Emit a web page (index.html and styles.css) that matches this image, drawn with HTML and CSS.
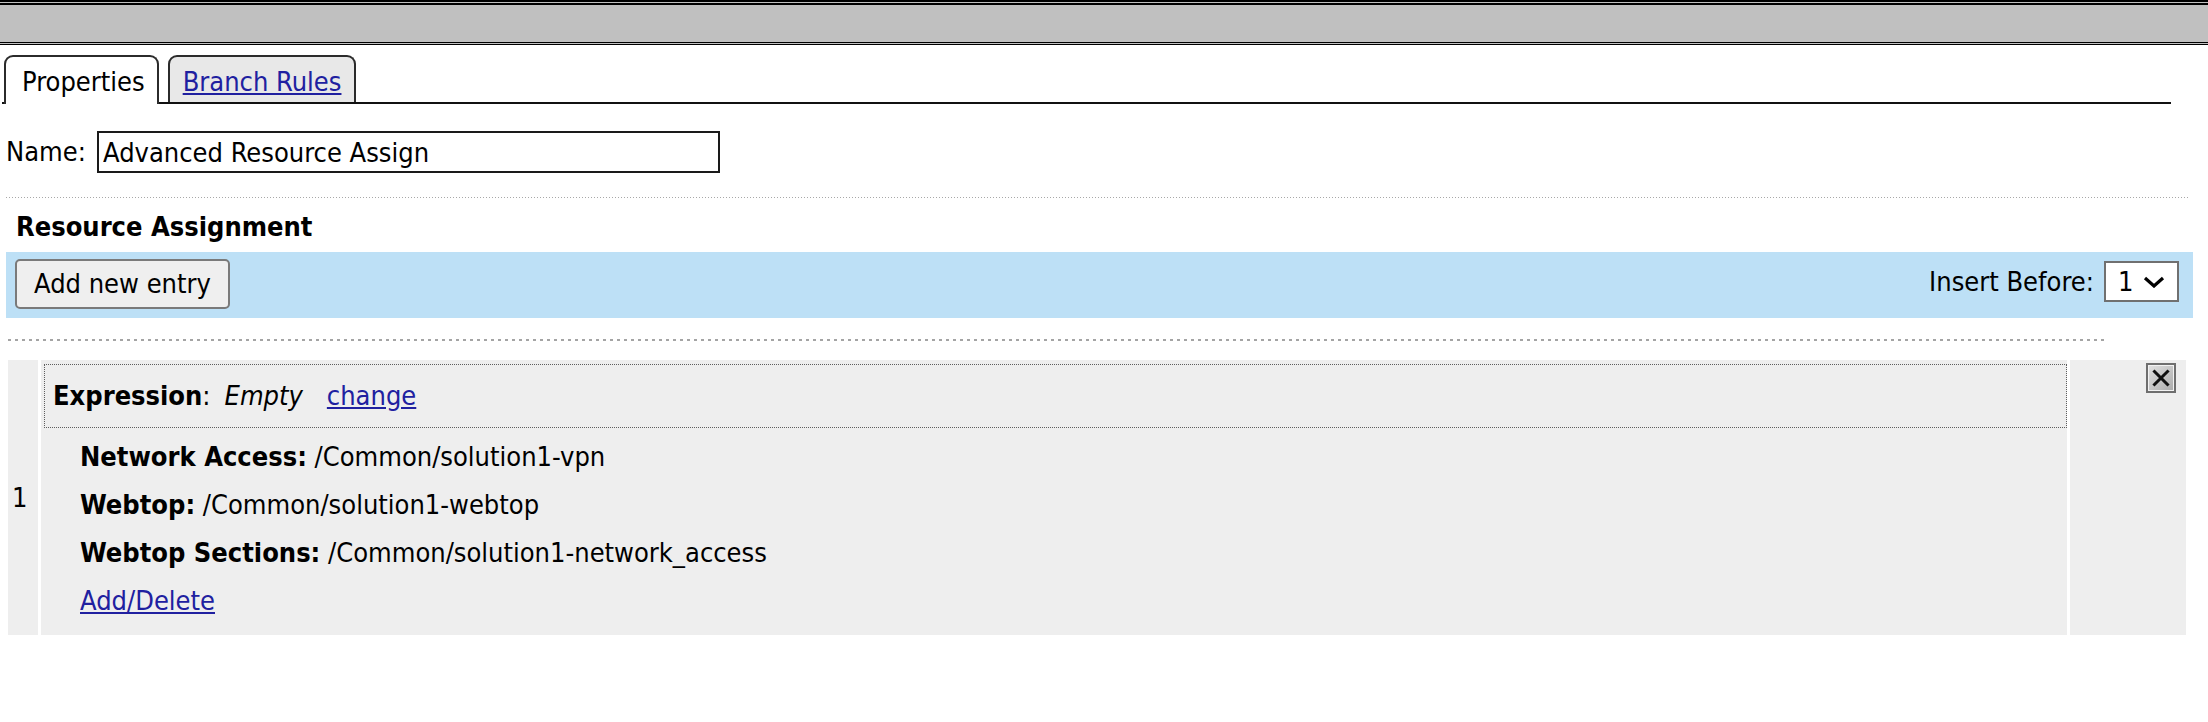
FILE: index.html
```html
<!DOCTYPE html>
<html>
<head>
<meta charset="utf-8">
<link rel="stylesheet" href="styles.css">
</head>
<body>
<div class="topbar"></div>
<div class="page">
  <div class="tabs">
    <div class="tab active">Properties</div>
    <div class="tab"><a href="#">Branch Rules</a></div>
  </div>
  <div class="name-row">
    <label class="name-label">Name:</label>
    <input class="name-input" type="text" value="Advanced Resource Assign">
  </div>
  <div class="sep-fine"></div>
  <div class="section-title">Resource Assignment</div>
  <div class="toolbar">
    <button class="btn">Add new entry</button>
    <div class="insert">
      <span>Insert Before:</span>
      <div class="select"><span>1</span><svg class="chev" width="22" height="12" viewBox="0 0 22 12"><polyline points="2,2 11,10 20,2" fill="none" stroke="#000" stroke-width="3.2"/></svg></div>
    </div>
  </div>
  <div class="sep-dots"></div>
  <div class="entry">
    <div class="num">1</div>
    <div class="main">
      <div class="expr"><b>Expression</b>:<i class="empty">Empty</i><a class="change" href="#">change</a></div>
      <div class="items">
        <div class="row"><b>Network Access:</b> /Common/solution1-vpn</div>
        <div class="row"><b>Webtop:</b> /Common/solution1-webtop</div>
        <div class="row"><b>Webtop Sections:</b> /Common/solution1-network_access</div>
        <div class="row"><a href="#">Add/Delete</a></div>
      </div>
    </div>
    <div class="actions">
      <svg class="xbtn" width="30" height="30" viewBox="0 0 30 30">
        <defs>
          <linearGradient id="xg" x1="0" y1="0" x2="1" y2="1">
            <stop offset="0" stop-color="#e4e4e4"/>
            <stop offset="1" stop-color="#a8a8a8"/>
          </linearGradient>
        </defs>
        <rect x="1" y="1" width="28" height="28" fill="url(#xg)" stroke="#6e6e6e" stroke-width="2"/>
        <rect x="2.5" y="2.5" width="25" height="25" fill="none" stroke="#f2f2f2" stroke-width="1"/>
        <path d="M8.5 8.5 L21.5 21.5 M21.5 8.5 L8.5 21.5" stroke="#111" stroke-width="3" stroke-linecap="square"/>
      </svg>
    </div>
  </div>
</div>
</body>
</html>
```

FILE: styles.css
```css
* { box-sizing: border-box; }
html, body { margin: 0; padding: 0; background: #fff; }
body {
  width: 2208px;
  font-family: "DejaVu Sans Condensed", "Liberation Sans", sans-serif;
  font-size: 27px;
  line-height: 30px;
  color: #000;
}
a { color: #2020a0; text-decoration: underline; }

.topbar {
  height: 45px;
  background: #c0c0c0;
  border-top: 5px double #000;
  border-bottom: 3px double #000;
}

.page { padding-left: 6px; }

.tabs {
  display: flex;
  gap: 9px;
  margin: 10px 0 0 -4px;
  padding-left: 2px;
  width: 2169px;
  height: 49px;
  border-bottom: 2px solid #111;
}
.tab {
  height: 47px;
  padding: 10px 13px 0;
  border: 2px solid #2b2b2b;
  border-bottom: 0;
  border-radius: 9px 9px 0 0;
  background: #e8e8e8;
}
.tab.active {
  height: 49px;
  margin-bottom: -2px;
  padding: 10px 12px 0 16px;
  background: #fff;
}

.name-row {
  display: flex;
  align-items: center;
  margin-top: 27px;
  height: 42px;
}
.name-label { width: 91px; }
.name-input {
  width: 623px;
  height: 42px;
  padding: 0 4px;
  border: 2px solid #1a1a1a;
  font: inherit;
  color: #000;
  background: #fff;
  outline: none;
}

.sep-fine {
  margin-top: 24px;
  width: 2184px;
  height: 1px;
  background-image: linear-gradient(to right, #a8a8a8 1px, transparent 1px);
  background-size: 3px 1px;
}

.section-title {
  margin: 14px 0 10px 10px;
  font-weight: bold;
}

.toolbar {
  display: flex;
  align-items: flex-start;
  width: 2187px;
  height: 66px;
  padding: 7px 14px 0 9px;
  background: #bde0f6;
}
.btn {
  height: 50px;
  padding: 0 17px;
  border: 2px solid #7a7a7a;
  border-radius: 5px;
  background: #efefef;
  font: inherit;
  color: #000;
}
.insert {
  display: flex;
  align-items: center;
  gap: 10px;
  margin-left: auto;
  margin-top: 2px;
  height: 41px;
}
.select {
  display: flex;
  align-items: center;
  width: 75px;
  height: 41px;
  padding-left: 12px;
  border: 2px solid #707070;
  background: #fff;
}
.chev { margin-left: 10px; }

.sep-dots {
  margin: 21px 0 0 2px;
  width: 2100px;
  height: 2px;
  background-image: linear-gradient(to right, #a4a4a4 3px, transparent 3px);
  background-size: 7px 2px;
}

.entry {
  display: flex;
  gap: 3px;
  margin: 19px 0 0 2px;
  width: 2178px;
  height: 275px;
}
.num {
  width: 30px;
  display: flex;
  align-items: center;
  padding-left: 4px;
  background: #eeeeee;
}
.main {
  flex: 1;
  padding: 4px 0 10px 0;
  background: #eeeeee;
}
.expr {
  display: flex;
  align-items: center;
  height: 64px;
  margin-left: 3px;
  padding: 0 8px;
  border: 1px dotted #5e5e5e;
}
.empty { margin-left: 14px; }
.change { margin-left: 24px; }
.items {
  margin-top: 5px;
  padding-left: 39px;
}
.row { line-height: 48px; height: 48px; white-space: pre; }
.actions {
  width: 116px;
  display: flex;
  justify-content: flex-end;
  align-items: flex-start;
  padding: 3px 10px 0 0;
  background: #eeeeee;
}
```
